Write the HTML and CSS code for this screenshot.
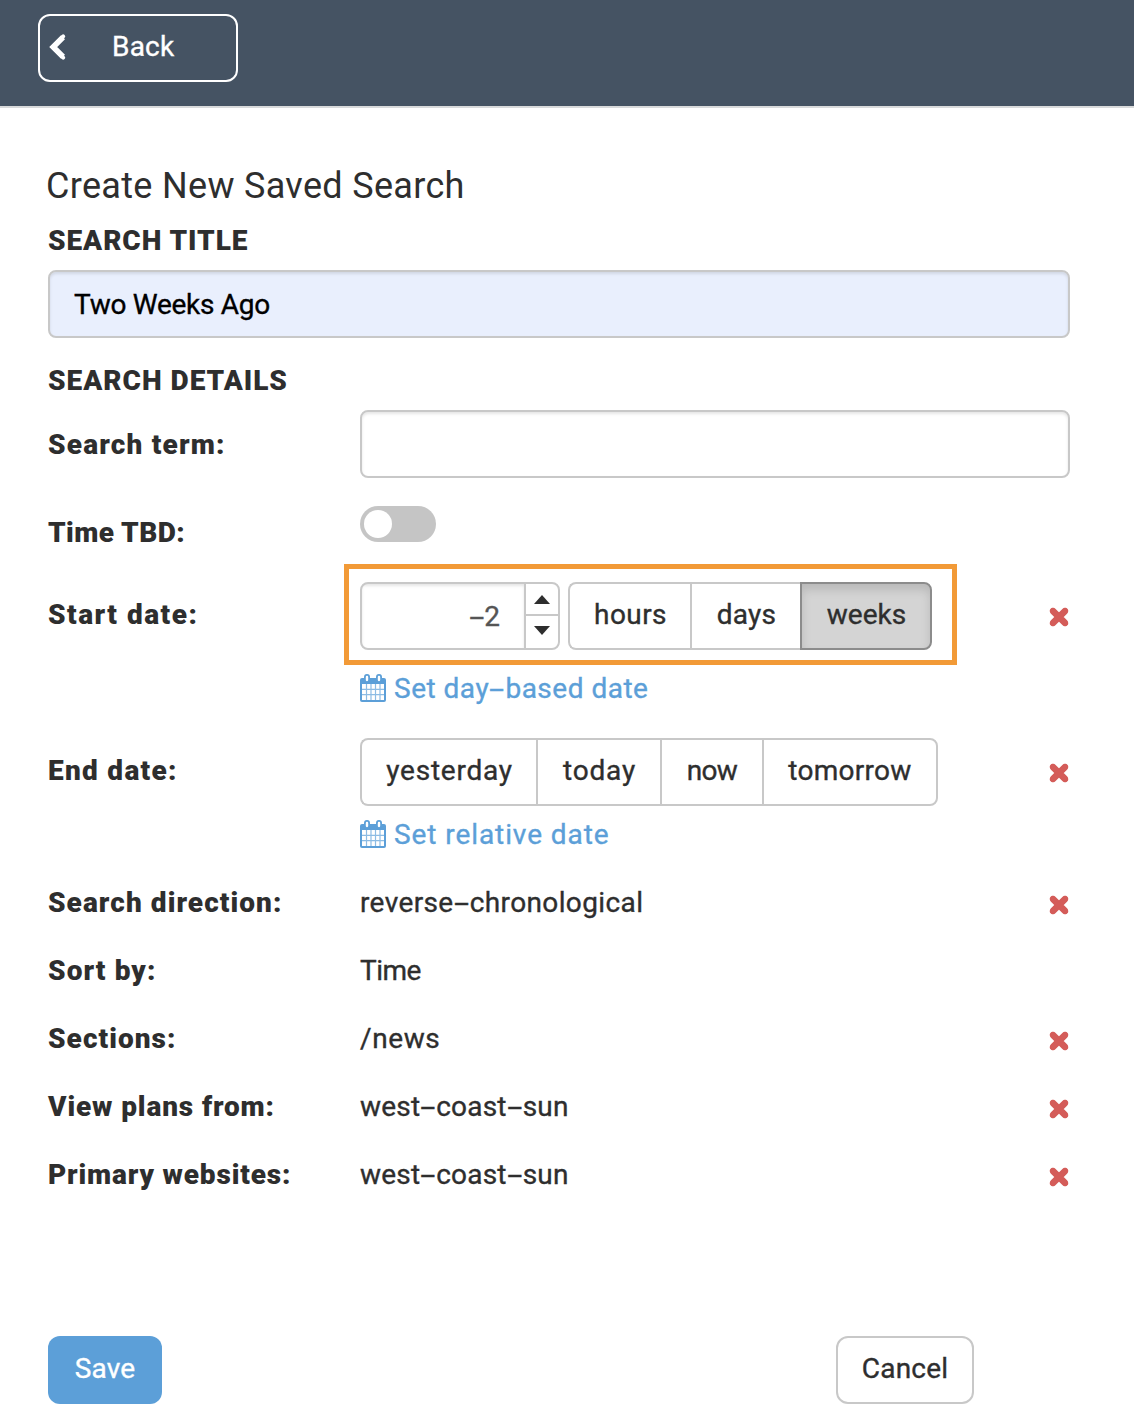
FILE: index.html
```html
<!DOCTYPE html>
<html lang="en">
<head>
<meta charset="utf-8">
<title>Create New Saved Search</title>
<link rel="stylesheet" href="styles.css">
</head>
<body>
<svg class="sprite" aria-hidden="true">
  <symbol id="times" viewBox="0 0 20 20"><path d="M4.3 4.3L15.7 15.7M15.7 4.3L4.3 15.7" fill="none" stroke="currentColor" stroke-width="6.6" stroke-linecap="round"/><path d="M3.4 3.4L16.6 16.6M16.6 3.4L3.4 16.6" fill="none" stroke="currentColor" stroke-width="5" stroke-linecap="round"/></symbol>
  <symbol id="calendar" viewBox="0 0 26 28">
    <path fill="currentColor" d="M2 4H24a2 2 0 0 1 2 2V26a2 2 0 0 1-2 2H2a2 2 0 0 1-2-2V6a2 2 0 0 1 2-2Z"/>
    <path fill="#fff" d="M2 10H24V26H2Z"/>
    <path fill="none" stroke="currentColor" stroke-opacity=".7" stroke-width="1.2" d="M6.5 10V26M11 10V26M15.5 10V26M20 10V26M2 15.3H24M2 20.7H24"/>
    <rect x="4.9" y=".9" width="4.2" height="7.2" rx="2" fill="#fff" stroke="currentColor" stroke-width="1.8"/>
    <rect x="16.9" y=".9" width="4.2" height="7.2" rx="2" fill="#fff" stroke="currentColor" stroke-width="1.8"/>
  </symbol>
</svg>

<header class="topbar">
  <button class="back">
    <svg class="back-icon" viewBox="0 0 18 28"><path d="M14 4.2L4.2 14L14 23.8" fill="none" stroke="currentColor" stroke-width="5.6"/><path d="M14.2 3.4L3.6 14L14.2 24.6" fill="none" stroke="currentColor" stroke-width="4" stroke-linecap="round"/></svg>
    <span>Back</span>
  </button>
</header>

<main class="page">
  <h1 class="title">Create New Saved Search</h1>

  <h2 class="heading heading-title">Search Title</h2>
  <div class="field field-filled">Two Weeks Ago</div>

  <h2 class="heading heading-details">Search Details</h2>
  <div class="row row-term">
    <div class="label l-term">Search term:</div>
    <div class="field"></div>
  </div>

  <div class="row row-tbd">
    <div class="label l-tbd">Time TBD:</div>
    <div class="toggle"><span class="knob"></span></div>
  </div>

  <div class="row row-start">
    <div class="label l-start">Start date:</div>
    <div class="value">
      <div class="controls">
        <div class="spinner">
          <div class="amount"><span class="dash">-</span>2</div>
          <div class="steps">
            <div class="step"><svg viewBox="0 0 16 9"><path d="M8 0L16 9H0Z"/></svg></div>
            <div class="step"><svg viewBox="0 0 16 9"><path d="M0 0H16L8 9Z"/></svg></div>
          </div>
        </div>
        <div class="group">
          <button class="seg s-hours">hours</button>
          <button class="seg s-days">days</button>
          <button class="seg s-weeks active">weeks</button>
        </div>
        <div class="highlight"></div>
      </div>
      <a class="link link-day"><svg><use href="#calendar"/></svg><span>Set day<span class="dash">-</span>based date</span></a>
    </div>
    <svg class="remove"><use href="#times"/></svg>
  </div>

  <div class="row row-end">
    <div class="label l-end">End date:</div>
    <div class="value">
      <div class="controls">
        <div class="group">
          <button class="seg s-yesterday">yesterday</button>
          <button class="seg s-today">today</button>
          <button class="seg s-now">now</button>
          <button class="seg s-tomorrow">tomorrow</button>
        </div>
      </div>
      <a class="link link-relative"><svg><use href="#calendar"/></svg><span>Set relative date</span></a>
    </div>
    <svg class="remove"><use href="#times"/></svg>
  </div>

  <div class="row row-text">
    <div class="label l-direction">Search direction:</div>
    <div class="text t-direction">reverse<span class="dash">-</span>chronological</div>
    <svg class="remove"><use href="#times"/></svg>
  </div>
  <div class="row row-text">
    <div class="label l-sort">Sort by:</div>
    <div class="text t-time">Time</div>
  </div>
  <div class="row row-text">
    <div class="label l-sections">Sections:</div>
    <div class="text t-news">/news</div>
    <svg class="remove"><use href="#times"/></svg>
  </div>
  <div class="row row-text">
    <div class="label l-plans">View plans from:</div>
    <div class="text t-sun">west<span class="dash">-</span>coast<span class="dash">-</span>sun</div>
    <svg class="remove"><use href="#times"/></svg>
  </div>
  <div class="row row-text">
    <div class="label l-sites">Primary websites:</div>
    <div class="text t-sun">west<span class="dash">-</span>coast<span class="dash">-</span>sun</div>
    <svg class="remove"><use href="#times"/></svg>
  </div>

  <div class="actions">
    <button class="btn btn-save">Save</button>
    <button class="btn btn-cancel">Cancel</button>
  </div>
</main>
</body>
</html>
```
FILE: styles.css
```css
* { box-sizing: border-box; }

body {
  margin: 0;
  background: #fff;
  color: #2e2e2e;
  font: 400 28px/42px Roboto, "Liberation Sans", sans-serif;
  -webkit-text-stroke-width: .35px;
}

button { font: inherit; color: inherit; margin: 0; padding: 0; background: none; }
.sprite { display: none; }
svg { display: block; flex: none; }

/* Top bar */
.topbar {
  height: 108px;
  padding: 14px 38px;
  background: #455363;
  border-bottom: 2px solid #d8dadb;
}
.back {
  display: flex;
  align-items: center;
  width: 200px;
  height: 68px;
  padding: 0 0 2px 9px;
  border: 2px solid #fff;
  border-radius: 12px;
  color: #fff;
  letter-spacing: .2px;
}
.back-icon { width: 18px; height: 28px; margin: 0 45px 0 0; }

/* Page */
.page { padding: 58px 64px 0 48px; }
.title {
  margin: 0 0 13px -2px;
  font-size: 36px;
  line-height: 41px;
  font-weight: 400;
  letter-spacing: .32px;
  -webkit-text-stroke-width: 0;
}
.heading {
  margin: 0 0 8px;
  font-size: 28px;
  line-height: 42px;
  font-weight: 900;
  text-transform: uppercase;
  -webkit-text-stroke-width: 0;
}
.heading-title { letter-spacing: .96px; }
.heading-details { letter-spacing: 1px; }

.field {
  height: 68px;
  padding: 12px 24px;
  border: 2px solid #c8c8c8;
  border-radius: 8px;
  background: #fff;
  box-shadow: inset 0 2px 3px rgba(0, 0, 0, .1);
}
.field-filled {
  margin-bottom: 22px;
  background: #e9effd;
  color: #000;
  letter-spacing: -.28px;
}

/* Rows */
.row { display: grid; grid-template-columns: 312px 1fr 21px; }
.label { font-weight: 900; white-space: nowrap; -webkit-text-stroke-width: 0; }
.row-term { grid-template-columns: 312px 1fr; height: 96px; }
.row-term .label { padding-top: 14px; }
.row-tbd { height: 76px; }
.row-tbd .label { padding-top: 6px; }
.row-start { height: 156px; }
.row-end { height: 144px; }
.row-start .label, .row-end .label { padding-top: 12px; }
.row-start .remove, .row-end .remove { margin-top: 25px; }
.row-text { height: 68px; }
.row-text .remove { margin-top: 13px; }

.l-term { letter-spacing: 1.19px; }
.l-tbd { letter-spacing: .43px; }
.l-start { letter-spacing: 1.5px; }
.l-end { letter-spacing: 1.29px; }
.l-direction { letter-spacing: 1.07px; }
.l-sort { letter-spacing: 1.1px; }
.l-sections { letter-spacing: 1.05px; }
.l-plans { letter-spacing: .88px; }
.l-sites { letter-spacing: .84px; }
.t-direction { letter-spacing: .38px; }
.t-time { letter-spacing: -.5px; }
.t-news { letter-spacing: .6px; }
.t-sun { letter-spacing: .2px; }

.dash { display: inline-block; transform: scaleX(1.9); margin: 0 4px; }
.remove { width: 20px; height: 20px; color: #d45c59; }

/* Toggle */
.toggle {
  width: 76px;
  height: 36px;
  padding: 4px;
  border-radius: 18px;
  background: #c5c5c5;
}
.knob { display: block; width: 28px; height: 28px; border-radius: 50%; background: #fff; }

/* Date controls */
.controls { position: relative; display: flex; width: max-content; gap: 8px; }
.spinner {
  display: flex;
  width: 200px;
  height: 68px;
  border: 2px solid #c8c8c8;
  border-radius: 8px;
  overflow: hidden;
}
.amount {
  flex: 1;
  padding: 12px 24px 0 0;
  text-align: right;
  color: #555;
  box-shadow: inset 0 2px 3px rgba(0, 0, 0, .1);
}
.steps { width: 34px; border-left: 2px solid #c8c8c8; }
.step { height: 30px; display: flex; align-items: center; justify-content: center; }
.step + .step { height: 34px; padding-bottom: 3px; border-top: 2px solid #c8c8c8; }
.step svg { width: 16px; height: 9px; fill: #2e2e2e; margin-top: 1px; }
.step + .step svg { margin-top: 0; }

.group { display: flex; }
.seg {
  height: 68px;
  padding: 0 0 2px 1px;
  border: 2px solid #c8c8c8;
  border-right-width: 0;
  background: #fff;
}
.seg:first-child { border-radius: 8px 0 0 8px; }
.seg:last-child { border-right-width: 2px; border-radius: 0 8px 8px 0; }
.seg.active {
  border-color: #8c8c8c;
  background: #d4d4d4;
  box-shadow: inset 0 6px 10px rgba(0, 0, 0, .125);
}
.s-hours { width: 122px; letter-spacing: .4px; }
.s-days { width: 110px; letter-spacing: .3px; }
.s-weeks { width: 132px; }
.s-yesterday { width: 176px; letter-spacing: .75px; }
.s-today { width: 124px; letter-spacing: .8px; }
.s-now { width: 102px; padding-left: 0; letter-spacing: -.7px; }
.s-tomorrow { width: 176px; padding-left: 0; letter-spacing: .28px; }

.highlight {
  position: absolute;
  inset: -18px -25px -15px -16px;
  border: 5px solid #f29a37;
  pointer-events: none;
}

.link { display: flex; gap: 8px; margin-top: 18px; color: #5c9fd8; }
.link svg { width: 26px; height: 28px; margin-top: 6px; }
.row-end .link { margin-top: 8px; }
.link-day { letter-spacing: .5px; }
.link-relative { letter-spacing: .92px; }

/* Actions */
.actions {
  display: flex;
  justify-content: space-between;
  margin: 114px 96px 0 0;
}
.btn { height: 68px; border-radius: 12px; padding-bottom: 2px; }
.btn-save {
  width: 114px;
  border: 0;
  background: #5c9fd8;
  color: #fff;
  letter-spacing: .2px;
}
.btn-cancel {
  width: 138px;
  border: 2px solid #c8c8c8;
  letter-spacing: .2px;
}
```
